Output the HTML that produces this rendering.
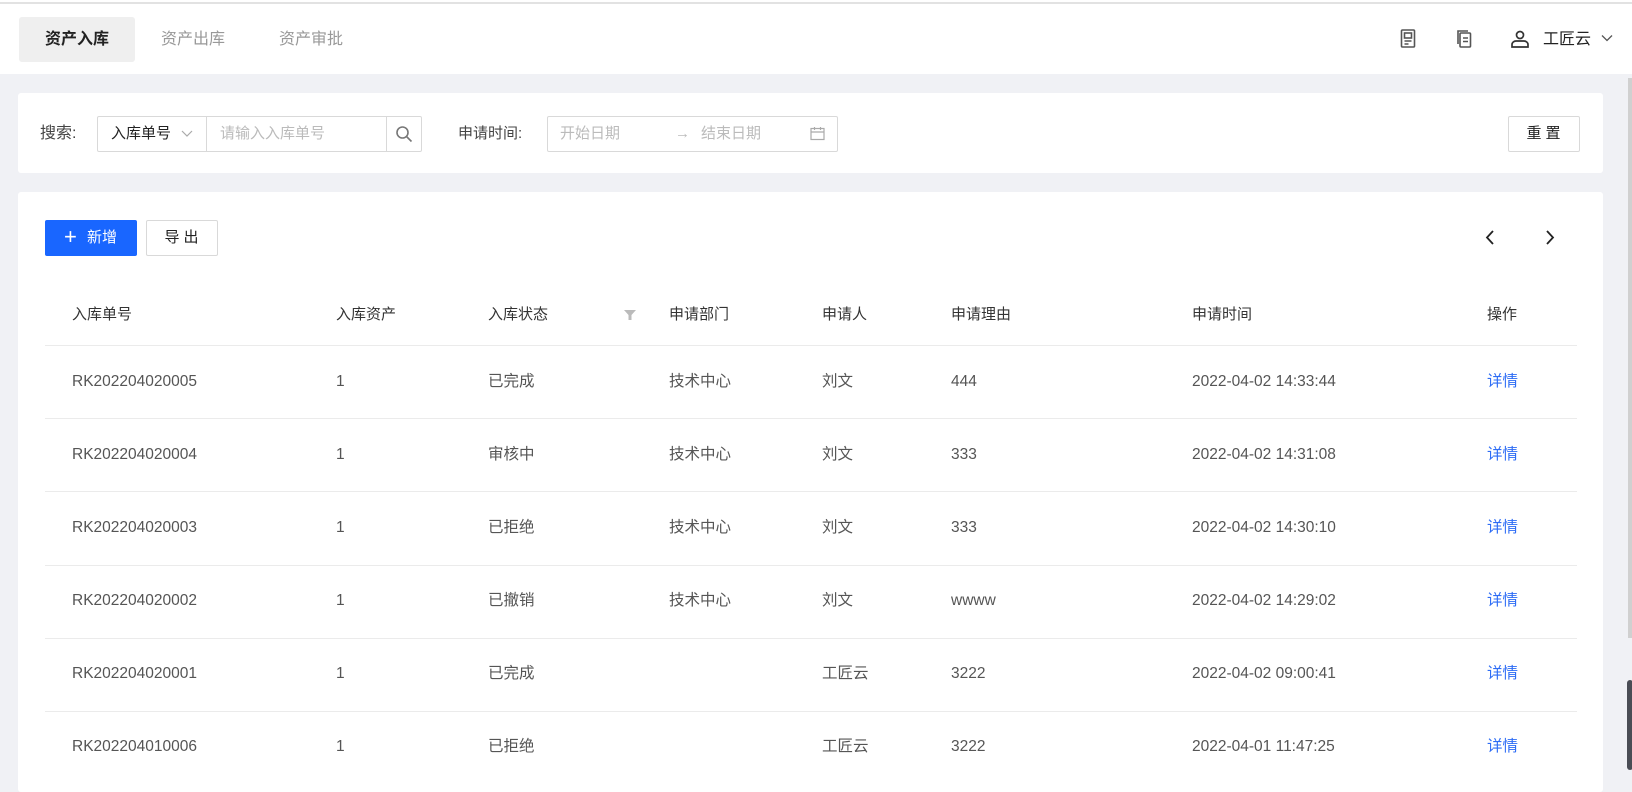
<!DOCTYPE html>
<html><head><meta charset="utf-8"><style>
*{box-sizing:border-box;margin:0;padding:0}
body{width:1632px;height:762px;overflow:hidden;background:#f0f1f5;font-family:"Liberation Sans","Noto Sans CJK SC",sans-serif;font-size:16px;color:#333;position:relative;line-height:20px}
.a{position:absolute}
.topline{left:0;top:0;width:1632px;height:4px;background:#fff}
.hdr{left:0;top:2px;width:1632px;height:72px;background:#fff;border-top:2px solid #e2e2e2}
.tab{top:15px;height:45px;line-height:45px;font-size:16px;color:#999}
.card{background:#fff;border-radius:3px}
.box{border:1px solid #d9d9d9;border-radius:2px;background:#fff}
.ph{color:#bbb;font-size:15px}
.th{font-size:15px;color:#333}
.line{left:45px;width:1532px;height:1px;background:#ebebeb}
.td{font-size:15.5px;color:#555;line-height:20px}
.lk{color:#2d6cf5;font-size:15.5px;line-height:20px}
</style></head><body>
<div class="a topline"></div>
<div class="a hdr"></div>
<div class="a" style="left:19px;top:17px;width:116px;height:45px;background:#efefef;border-radius:3px"></div>
<div class="a tab" style="left:45px;top:17px;color:#222;font-weight:bold">资产入库</div>
<div class="a tab" style="left:161px;top:17px">资产出库</div>
<div class="a tab" style="left:279px;top:17px">资产审批</div>
<svg class="a" style="left:1400px;top:29px" width="16" height="19" viewBox="0 0 16 19" fill="none" stroke="#555" stroke-width="1.6"><rect x="1.5" y="1" width="13" height="17" rx="1"/><rect x="4.5" y="4" width="7" height="5"/><path d="M4.5 12h7M4.5 15h4"/></svg>
<svg class="a" style="left:1455px;top:29px" width="17" height="19" viewBox="0 0 17 19" fill="none" stroke="#555" stroke-width="1.6"><path d="M3 15V2h10"/><rect x="5" y="4" width="10.5" height="14" rx="1"/><path d="M8 9h5M8 12.5h5"/></svg>
<svg class="a" style="left:1510px;top:30px" width="20" height="18" viewBox="0 0 20 18" fill="none" stroke="#333" stroke-width="1.7"><circle cx="10" cy="5" r="3.5"/><path d="M2 17v-2.5c0-2 2-3.5 4-3.5h8c2 0 4 1.5 4 3.5V17z"/></svg>
<div class="a" style="left:1543px;top:30px;font-size:16px;color:#222">工匠云</div>
<svg class="a" style="left:1601px;top:34px" width="12" height="8" viewBox="0 0 12 8" fill="none" stroke="#555" stroke-width="1.3"><path d="M1 1.5l5 5 5-5"/></svg>

<div class="a card" style="left:18px;top:93px;width:1585px;height:80px"></div>
<div class="a" style="left:40px;top:124px;font-size:16px;color:#444">搜索:</div>
<div class="a box" style="left:97px;top:116px;width:325px;height:36px"></div>
<div class="a" style="left:206px;top:116px;width:1px;height:36px;background:#d9d9d9"></div>
<div class="a" style="left:386px;top:116px;width:1px;height:36px;background:#d9d9d9"></div>
<div class="a" style="left:111px;top:124px;font-size:15px;color:#222">入库单号</div>
<svg class="a" style="left:181px;top:130px" width="12" height="8" viewBox="0 0 12 8" fill="none" stroke="#aaa" stroke-width="1.2"><path d="M1 1l5 5 5-5"/></svg>
<div class="a ph" style="left:220px;top:124px">请输入入库单号</div>
<svg class="a" style="left:395px;top:125px" width="18" height="18" viewBox="0 0 18 18" fill="none" stroke="#777" stroke-width="1.6"><circle cx="7.5" cy="7.5" r="5.5"/><path d="M11.5 11.5l5 5"/></svg>
<div class="a" style="left:458px;top:124px;font-size:15px;color:#444">申请时间:</div>
<div class="a box" style="left:547px;top:116px;width:291px;height:36px"></div>
<div class="a ph" style="left:560px;top:124px">开始日期</div>
<div class="a" style="left:675px;top:124px;color:#bbb;font-size:15px">→</div>
<div class="a ph" style="left:701px;top:124px">结束日期</div>
<svg class="a" style="left:810px;top:126px" width="15" height="15" viewBox="0 0 15 15" fill="none" stroke="#aaa" stroke-width="1.2"><rect x="1" y="2.5" width="13" height="11"/><path d="M1 6h13M4.5 1v3M10.5 1v3"/></svg>
<div class="a box" style="left:1508px;top:116px;width:72px;height:36px;text-align:center;line-height:34px;font-size:15px;color:#222;letter-spacing:4px;padding-left:3px">重置</div>

<div class="a card" style="left:18px;top:192px;width:1585px;height:600px"></div>
<div class="a" style="left:45px;top:220px;width:92px;height:36px;background:#1966ff;border-radius:2px;color:#fff;font-size:15px;line-height:36px"><span style="position:absolute;left:19px;top:-1px;font-size:22px;font-weight:300">+</span><span style="position:absolute;left:42px">新增</span></div>
<div class="a box" style="left:146px;top:220px;width:72px;height:36px;text-align:center;line-height:34px;font-size:15px;color:#222;letter-spacing:4px;padding-left:3px">导出</div>
<svg class="a" style="left:1484px;top:229px" width="12" height="17" viewBox="0 0 12 17" fill="none" stroke="#222" stroke-width="1.8"><path d="M9 2L3 8.5 9 15"/></svg>
<svg class="a" style="left:1544px;top:229px" width="12" height="17" viewBox="0 0 12 17" fill="none" stroke="#222" stroke-width="1.8"><path d="M3 2l6 6.5L3 15"/></svg>

<div class="a th" style="left:72px;top:305px">入库单号</div>
<div class="a th" style="left:336px;top:305px">入库资产</div>
<div class="a th" style="left:488px;top:305px">入库状态</div>
<svg class="a" style="left:624px;top:309px" width="12" height="12" viewBox="0 0 12 12"><path d="M0 1h12L7.5 6v5h-3V6z" fill="#bbb"/></svg>
<div class="a th" style="left:669px;top:305px">申请部门</div>
<div class="a th" style="left:822px;top:305px">申请人</div>
<div class="a th" style="left:951px;top:305px">申请理由</div>
<div class="a th" style="left:1192px;top:305px">申请时间</div>
<div class="a th" style="left:1487px;top:305px">操作</div>
<div class="a line" style="top:345px"></div>

<div class="a" style="left:0;top:372px;width:1632px">
<div class="a td" style="left:72px">RK202204020005</div><div class="a td" style="left:336px">1</div><div class="a td" style="left:488px">已完成</div><div class="a td" style="left:669px">技术中心</div><div class="a td" style="left:822px">刘文</div><div class="a td" style="left:951px">444</div><div class="a td" style="left:1192px">2022-04-02 14:33:44</div><div class="a lk" style="left:1487px">详情</div>
</div>
<div class="a line" style="top:418px"></div>
<div class="a" style="left:0;top:445px;width:1632px">
<div class="a td" style="left:72px">RK202204020004</div><div class="a td" style="left:336px">1</div><div class="a td" style="left:488px">审核中</div><div class="a td" style="left:669px">技术中心</div><div class="a td" style="left:822px">刘文</div><div class="a td" style="left:951px">333</div><div class="a td" style="left:1192px">2022-04-02 14:31:08</div><div class="a lk" style="left:1487px">详情</div>
</div>
<div class="a line" style="top:491px"></div>
<div class="a" style="left:0;top:518px;width:1632px">
<div class="a td" style="left:72px">RK202204020003</div><div class="a td" style="left:336px">1</div><div class="a td" style="left:488px">已拒绝</div><div class="a td" style="left:669px">技术中心</div><div class="a td" style="left:822px">刘文</div><div class="a td" style="left:951px">333</div><div class="a td" style="left:1192px">2022-04-02 14:30:10</div><div class="a lk" style="left:1487px">详情</div>
</div>
<div class="a line" style="top:565px"></div>
<div class="a" style="left:0;top:591px;width:1632px">
<div class="a td" style="left:72px">RK202204020002</div><div class="a td" style="left:336px">1</div><div class="a td" style="left:488px">已撤销</div><div class="a td" style="left:669px">技术中心</div><div class="a td" style="left:822px">刘文</div><div class="a td" style="left:951px">wwww</div><div class="a td" style="left:1192px">2022-04-02 14:29:02</div><div class="a lk" style="left:1487px">详情</div>
</div>
<div class="a line" style="top:638px"></div>
<div class="a" style="left:0;top:664px;width:1632px">
<div class="a td" style="left:72px">RK202204020001</div><div class="a td" style="left:336px">1</div><div class="a td" style="left:488px">已完成</div><div class="a td" style="left:822px">工匠云</div><div class="a td" style="left:951px">3222</div><div class="a td" style="left:1192px">2022-04-02 09:00:41</div><div class="a lk" style="left:1487px">详情</div>
</div>
<div class="a line" style="top:711px"></div>
<div class="a" style="left:0;top:737px;width:1632px">
<div class="a td" style="left:72px">RK202204010006</div><div class="a td" style="left:336px">1</div><div class="a td" style="left:488px">已拒绝</div><div class="a td" style="left:822px">工匠云</div><div class="a td" style="left:951px">3222</div><div class="a td" style="left:1192px">2022-04-01 11:47:25</div><div class="a lk" style="left:1487px">详情</div>
</div>

<div class="a" style="left:1628px;top:78px;width:4px;height:560px;background:#d0d0d0"></div>
<div class="a" style="left:1627px;top:680px;width:6px;height:90px;background:#4a4d55;border-radius:3px"></div>
</body></html>
